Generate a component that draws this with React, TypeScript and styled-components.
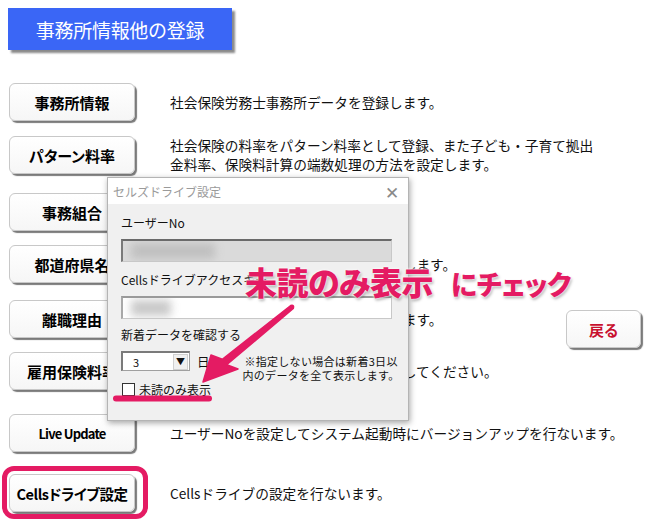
import React from "react";
import styled, { createGlobalStyle } from "styled-components";

const Global = createGlobalStyle`
  html, body { margin: 0; padding: 0; background: #fff; }
  body { font-family: "Noto Sans CJK JP", "Noto Sans", sans-serif; color: #111; }
`;

const Page = styled.div`
  position: relative;
  width: 650px;
  height: 520px;
  overflow: hidden;
  background: #fff;
`;

const TitleBox = styled.div`
  margin: 8px 0 0 8px;
  width: 224px;
  height: 42px;
  background: #3a66f6;
  color: #fff;
  font-size: 19px;
  display: flex;
  align-items: center;
  justify-content: center;
  box-shadow: 3px 3px 2px #8a8a8a;
  letter-spacing: -0.3px;
`;

const Rows = styled.div`
  display: flex;
  flex-direction: column;
  padding-left: 9px;
`;

const Row = styled.div<{ $gap: number }>`
  display: flex;
  align-items: center;
  margin-top: ${(p) => p.$gap}px;
`;

const MenuButton = styled.div<{ $fs?: number; $ls?: number }>`
  flex: 0 0 auto;
  width: 126px;
  height: 38px;
  box-sizing: border-box;
  border: 1px solid #c8c8c8;
  border-radius: 6px;
  background: linear-gradient(#ffffff, #f6f6f6);
  box-shadow: 2px 2px 1px #7a7a7a;
  display: flex;
  align-items: center;
  justify-content: center;
  font-weight: bold;
  font-size: ${(p) => p.$fs ?? 15}px;
  letter-spacing: ${(p) => p.$ls ?? 0}px;
  font-feature-settings: "palt";
  color: #000;
  white-space: nowrap;
`;

const Desc = styled.div`
  margin-left: 35px;
  font-size: 13.7px;
  line-height: 19px;
  color: #111;
  white-space: nowrap;
`;

const BackButton = styled(MenuButton)`
  width: 75px;
  margin-left: auto;
  margin-right: 9px;
  margin-top: 10px;
  margin-bottom: -10px;
  color: #c8102e;
`;

const Dialog = styled.div`
  position: absolute;
  left: 107px;
  top: 177px;
  width: 302px;
  height: 244px;
  box-sizing: border-box;
  background: #f0f0f0;
  border: 1px solid #b4b4b4;
  box-shadow: 1px 2px 6px rgba(0, 0, 0, 0.35);
  display: flex;
  flex-direction: column;
  font-size: 12px;
`;

const DialogTitle = styled.div`
  height: 26px;
  background: #fff;
  display: flex;
  align-items: center;
  justify-content: space-between;
  padding: 0 9px 0 5px;
  color: #9a9a9a;
  font-size: 12px;
`;

const CloseX = styled.span`
  color: #8a8a8a;
  font-size: 17px;
  font-weight: 300;
`;

const DialogBody = styled.div`
  display: flex;
  flex-direction: column;
  padding: 10px 16px 0 13px;
`;

const Label = styled.div<{ $top?: number }>`
  margin-top: ${(p) => p.$top ?? 0}px;
  height: 16px;
  line-height: 16px;
  font-size: 12px;
  color: #111;
`;

const Field = styled.div<{ $disabled?: boolean }>`
  position: relative;
  margin-top: 8px;
  height: 23px;
  box-sizing: border-box;
  background: ${(p) => (p.$disabled ? "#dadada" : "#fff")};
  border: 1px solid #c8c8c8;
  border-top: 2px solid ${(p) => (p.$disabled ? "#6a6a6a" : "#9a9a9a")};
  border-left: 2px solid ${(p) => (p.$disabled ? "#7a7a7a" : "#a8a8a8")};
  overflow: hidden;
`;

const Blur = styled.div<{ $w: number }>`
  position: absolute;
  left: 8px;
  top: 2px;
  bottom: 2px;
  width: ${(p) => p.$w}px;
  background: #b8b8b8;
  filter: blur(4px);
  opacity: 0.75;
`;

const SelectRow = styled.div`
  display: flex;
  align-items: flex-start;
  margin-top: 8px;
`;

const Select = styled.div`
  flex: 0 0 auto;
  width: 69px;
  height: 20px;
  box-sizing: border-box;
  border: 1px solid #a0a0a0;
  border-top: 2px solid #7a7a7a;
  border-left: 2px solid #7a7a7a;
  background: #fff;
  display: flex;
  align-items: center;
  justify-content: space-between;
  font-size: 11px;
  padding-left: 10px;
`;

const SelectArrow = styled.div`
  width: 15px;
  height: 16px;
  margin-right: 1px;
  box-sizing: border-box;
  background: #f0f0f0;
  border: 1px solid #d0d0d0;
  display: flex;
  align-items: center;
  justify-content: center;
  font-size: 9px;
`;

const DayLabel = styled.span`
  flex: 0 0 auto;
  margin-left: 7px;
  margin-top: 1px;
  font-size: 12.5px;
`;

const Note = styled.div`
  flex: 0 0 auto;
  margin-left: 33px;
  margin-top: 3px;
  text-align: center;
  font-size: 11px;
  line-height: 14px;
  letter-spacing: 0.3px;
  white-space: nowrap;
`;

const CheckRow = styled.div`
  display: flex;
  align-items: center;
  margin-top: -1px;
  gap: 4px;
  font-size: 12px;
  height: 16px;
`;

const CheckBox = styled.span`
  width: 11px;
  height: 11px;
  border: 1px solid #333;
  background: #fff;
  margin-left: 1px;
`;

const Callout = styled.div`
  position: absolute;
  left: 245px;
  top: 258px;
  display: flex;
  align-items: baseline;
  gap: 18px;
  color: #e41b63;
  font-weight: 900;
  font-size: 32px;
  letter-spacing: -0.5px;
  font-feature-settings: "palt";
  text-shadow: 0 0 2px #fff, 0 0 3px #fff, 1px 2px 3px rgba(0, 0, 0, 0.35);
  white-space: nowrap;
`;

const CalloutSmall = styled.span`
  font-size: 27px;
`;

const Overlay = styled.svg`
  position: absolute;
  left: 0;
  top: 0;
  width: 650px;
  height: 520px;
  pointer-events: none;
`;

const Ring = styled.div`
  position: absolute;
  left: 2px;
  top: 466px;
  width: 146px;
  height: 53px;
  box-sizing: border-box;
  border: 5px solid #e41b63;
  border-radius: 12px;
`;

type RowData = { gap: number; label: string; desc: string[]; fs?: number; ls?: number; back?: boolean };

const rows: RowData[] = [
  { gap: 33, label: "事務所情報", desc: ["社会保険労務士事務所データを登録します。"] },
  {
    gap: 15,
    label: "パターン料率",
    desc: ["社会保険の料率をパターン料率として登録、また子ども・子育て拠出", "金料率、保険料計算の端数処理の方法を設定します。"],
  },
  { gap: 19, label: "事務組合", desc: ["労働保険事務組合データを登録します。"] },
  { gap: 14, label: "都道府県名", desc: ["都道府県名と最低賃金のデータを登録します。"] },
  { gap: 17, label: "離職理由", desc: ["離職理由の区分名称とコードを登録します。"], back: true },
  { gap: 14, label: "雇用保険料率", desc: ["雇用保険料率が変更された場合に変更してください。"] },
  { gap: 24, label: "Live Update", fs: 13, ls: -0.8, desc: ["ユーザーNoを設定してシステム起動時にバージョンアップを行ないます。"] },
  { gap: 22, label: "Cellsドライブ設定", fs: 14.5, ls: -0.4, desc: ["Cellsドライブの設定を行ないます。"] },
];

export default function App() {
  return (
    <Page>
      <Global />
      <TitleBox>事務所情報他の登録</TitleBox>
      <Rows>
        {rows.map((r) => (
          <Row key={r.label} $gap={r.gap}>
            <MenuButton $fs={r.fs} $ls={r.ls}>
              {r.label}
            </MenuButton>
            <Desc>
              {r.desc.map((d, i) => (
                <div key={i}>{d}</div>
              ))}
            </Desc>
            {r.back && <BackButton>戻る</BackButton>}
          </Row>
        ))}
      </Rows>

      <Dialog>
        <DialogTitle>
          <span>セルズドライブ設定</span>
          <CloseX>✕</CloseX>
        </DialogTitle>
        <DialogBody>
          <Label $top={1}>ユーザーNo</Label>
          <Field $disabled>
            <Blur $w={84} />
          </Field>
          <Label $top={10}>Cellsドライブアクセスキー</Label>
          <Field>
            <Blur $w={40} />
          </Field>
          <Label $top={8}>新着データを確認する</Label>
          <SelectRow>
            <Select>
              <span>3</span>
              <SelectArrow>▼</SelectArrow>
            </Select>
            <DayLabel>日</DayLabel>
            <Note>
              ※指定しない場合は新着3日以
              <br />
              内のデータを全て表示します。
            </Note>
          </SelectRow>
          <CheckRow>
            <CheckBox />
            <span>未読のみ表示</span>
          </CheckRow>
        </DialogBody>
      </Dialog>

      <Overlay viewBox="0 0 650 520">
        <line x1="116" y1="398.5" x2="209" y2="398.5" stroke="#e41b63" strokeWidth="6" strokeLinecap="round" />
        <path
          d="M203 382 L211 355 L222.3 359.3 L290.7 305.5 Q294.5 304.5 293.3 308.5 L226.7 364.7 L238 369 Z"
          fill="#e41b63"
          stroke="#e41b63"
          strokeWidth="1.5"
          strokeLinejoin="round"
        />
      </Overlay>
      <Callout>
        <span>未読のみ表示</span>
        <CalloutSmall>にチェック</CalloutSmall>
      </Callout>
      <Ring />
    </Page>
  );
}
